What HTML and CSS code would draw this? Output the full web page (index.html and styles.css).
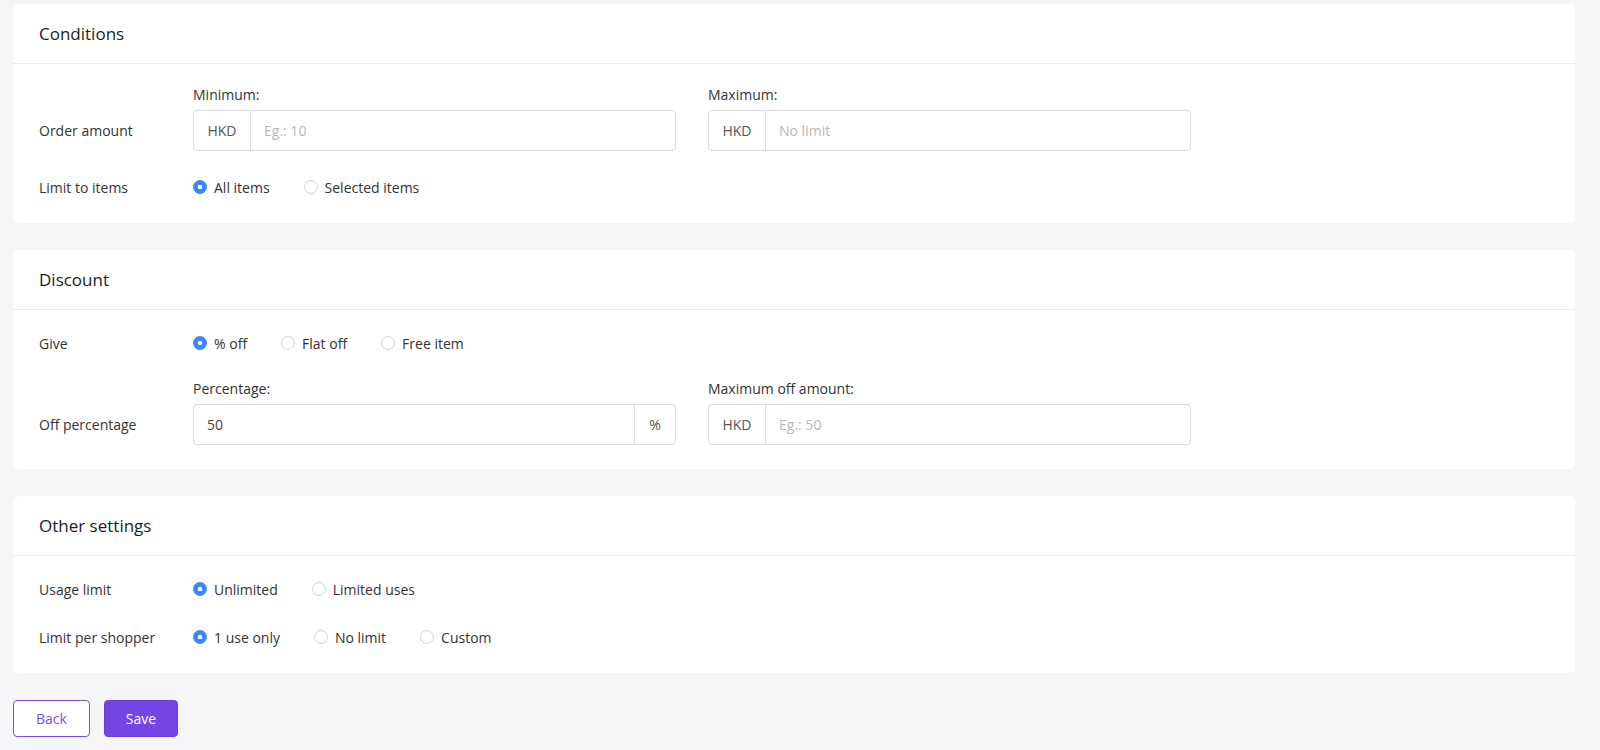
FILE: index.html
```html
<!DOCTYPE html>
<html>
<head>
<meta charset="utf-8">
<link rel="stylesheet" href="styles.css">
</head>
<body>
<div class="page">
  <section class="card">
    <div class="card-header">Conditions</div>
    <div class="card-body">
      <div class="row">
        <div class="row-label bottom">Order amount</div>
        <div class="fields">
          <div class="field">
            <div class="field-label">Minimum:</div>
            <div class="input-group">
              <span class="addon left">HKD</span>
              <span class="input placeholder">Eg.: 10</span>
            </div>
          </div>
          <div class="field">
            <div class="field-label">Maximum:</div>
            <div class="input-group">
              <span class="addon left">HKD</span>
              <span class="input placeholder">No limit</span>
            </div>
          </div>
        </div>
      </div>
      <div class="row">
        <div class="row-label">Limit to items</div>
        <div class="radios">
          <label class="radio checked"><span class="dot"></span>All items</label>
          <label class="radio"><span class="dot"></span>Selected items</label>
        </div>
      </div>
    </div>
  </section>

  <section class="card">
    <div class="card-header">Discount</div>
    <div class="card-body">
      <div class="row">
        <div class="row-label">Give</div>
        <div class="radios">
          <label class="radio checked"><span class="dot"></span>% off</label>
          <label class="radio"><span class="dot"></span>Flat off</label>
          <label class="radio"><span class="dot"></span>Free item</label>
        </div>
      </div>
      <div class="row">
        <div class="row-label bottom">Off percentage</div>
        <div class="fields">
          <div class="field">
            <div class="field-label">Percentage:</div>
            <div class="input-group">
              <span class="input value">50</span>
              <span class="addon right">%</span>
            </div>
          </div>
          <div class="field">
            <div class="field-label">Maximum off amount:</div>
            <div class="input-group">
              <span class="addon left">HKD</span>
              <span class="input placeholder">Eg.: 50</span>
            </div>
          </div>
        </div>
      </div>
    </div>
  </section>

  <section class="card">
    <div class="card-header">Other settings</div>
    <div class="card-body">
      <div class="row">
        <div class="row-label">Usage limit</div>
        <div class="radios">
          <label class="radio checked"><span class="dot"></span>Unlimited</label>
          <label class="radio"><span class="dot"></span>Limited uses</label>
        </div>
      </div>
      <div class="row">
        <div class="row-label">Limit per shopper</div>
        <div class="radios">
          <label class="radio checked"><span class="dot"></span>1 use only</label>
          <label class="radio"><span class="dot"></span>No limit</label>
          <label class="radio"><span class="dot"></span>Custom</label>
        </div>
      </div>
    </div>
  </section>

  <div class="actions">
    <button class="btn btn-outline">Back</button>
    <button class="btn btn-primary">Save</button>
  </div>
</div>
</body>
</html>
```

FILE: styles.css
```css
* { box-sizing: border-box; }
html, body { margin: 0; padding: 0; }
body {
  background: #f5f6f8;
  font-family: "Open Sans", "Liberation Sans", sans-serif;
  font-size: 14px;
  color: #333;
}
.page {
  width: 1562px;
  margin-left: 13px;
  padding-top: 4px;
  display: flex;
  flex-direction: column;
  gap: 27px;
}
.card {
  background: #fff;
  border-radius: 5px;
}
.card-header {
  height: 60px;
  border-bottom: 1px solid #ebebee;
  padding: 0 26px;
  display: flex;
  align-items: center;
  font-size: 17px;
  font-weight: 500;
  color: #1d1d22;
}
.card-body {
  padding: 21px 26px 24px;
  display: flex;
  flex-direction: column;
  gap: 24px;
}
.row {
  display: flex;
  align-items: stretch;
}
.row-label {
  width: 154px;
  flex: none;
  height: 24px;
  display: flex;
  align-items: center;
  color: #333;
}
.row-label.bottom {
  height: 41px;
  align-self: flex-end;
}
.fields {
  display: flex;
  gap: 32px;
}
.field {
  width: 483px;
  display: flex;
  flex-direction: column;
  gap: 5px;
}
.field-label {
  height: 20px;
  line-height: 20px;
  color: #333;
}
.input-group {
  height: 41px;
  display: flex;
  border: 1px solid #dcdcdf;
  border-radius: 4px;
  background: #fff;
}
.addon {
  display: flex;
  align-items: center;
  justify-content: center;
  color: #555;
  flex: none;
}
.addon.left {
  width: 57px;
  border-right: 1px solid #dcdcdf;
}
.addon.right {
  width: 41px;
  border-left: 1px solid #dcdcdf;
}
.input {
  flex: 1;
  display: flex;
  align-items: center;
  padding: 0 13px;
}
.input.placeholder { color: #b8b8bc; }
.input.value { color: #444; }
.radios {
  display: flex;
  align-items: center;
  height: 24px;
}
.radio {
  display: flex;
  align-items: center;
  gap: 7px;
  margin-right: 34px;
  color: #333;
}
.dot {
  width: 14px;
  height: 14px;
  border-radius: 50%;
  border: 1px solid #d3d3d6;
  background: #fff;
  flex: none;
}
.radio.checked .dot {
  border-color: #3b86f6;
  background: radial-gradient(circle, #fff 0 2px, #3b86f6 2.6px);
}
.actions {
  display: flex;
  gap: 14px;
}
.btn {
  height: 37px;
  border-radius: 4px;
  font-family: inherit;
  font-size: 14px;
  padding: 0;
  cursor: pointer;
}
.btn-outline {
  width: 77px;
  background: #fff;
  border: 1px solid #7a4ee8;
  color: #7a4ee8;
}
.btn-primary {
  width: 74px;
  background: #7446e6;
  border: 1px solid #6a3be0;
  color: #fff;
}
```
